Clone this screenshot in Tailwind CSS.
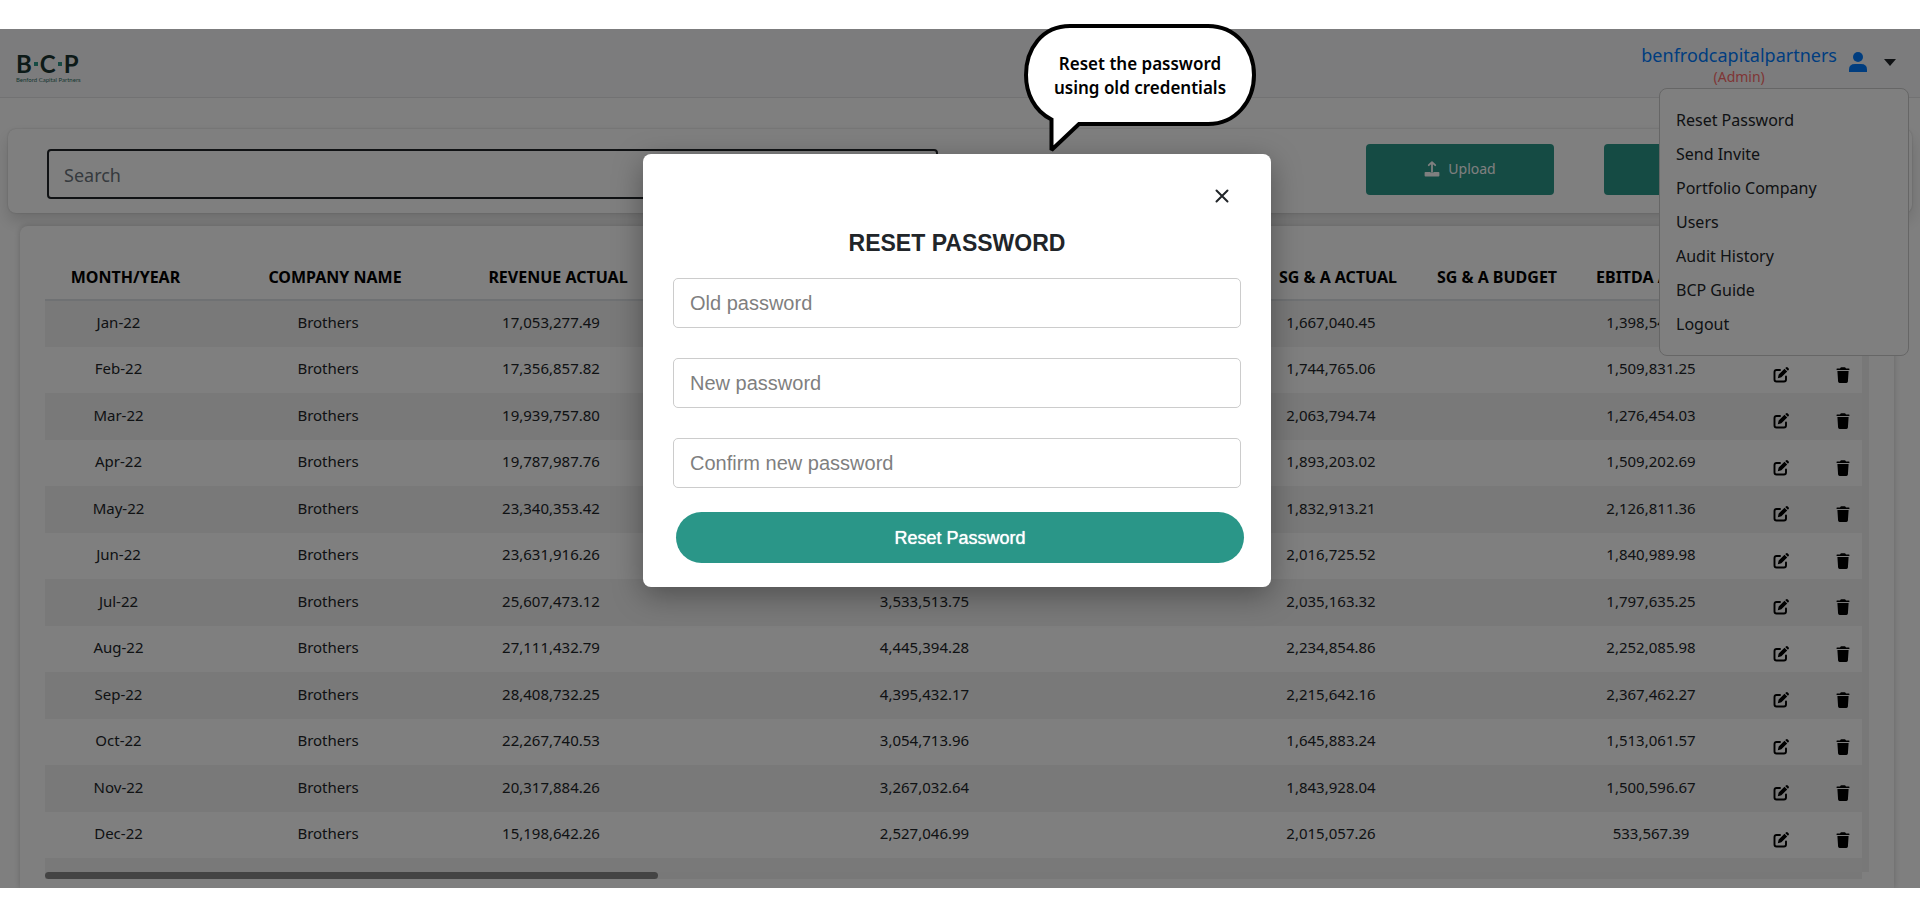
<!DOCTYPE html>
<html lang="en">
<head>
<meta charset="utf-8">
<meta name="viewport" content="width=device-width, initial-scale=1">
<title>BCP – Reset password</title>
<script src="https://cdn.jsdelivr.net/npm/@tailwindcss/browser@4"></script>
</head>
<body class="bg-white">
<svg class="hidden" aria-hidden="true">
  <symbol id="edit" viewBox="0 0 16 16">
    <path d="M7 3H3.500Q1.500 3 1.500 5V12.500Q1.500 14.500 3.500 14.500H11Q13 14.500 13 12.500V9.500" fill="none" stroke="currentColor" stroke-width="1.900" stroke-linecap="round"/>
    <path d="M11.500 1.800L14.200 4.500L8.400 10.300L4.800 11.200L5.700 7.600ZM12.200 1.100L13 .4Q13.900-.3 14.800.5L15.500 1.200Q16.300 2.100 15.600 3L14.900 3.800Z" fill="currentColor"/>
  </symbol>
  <symbol id="trash" viewBox="0 0 14 16">
    <path d="M4.300.9Q4.600.2 5.300.2H8.700Q9.400.2 9.700.9L10 1.400H12.800Q13.600 1.400 13.600 2.200T12.800 3H1.200Q.4 3 .4 2.200T1.200 1.400H4ZM1.400 4H12.600L11.900 14.500Q11.800 15.900 10.400 15.900H3.600Q2.200 15.900 2.100 14.500Z" fill="currentColor"/>
  </symbol>
</svg>

<div class="relative flex min-h-screen flex-col pt-[29px] pb-[30px]">
  <div class="relative flex flex-1 flex-col overflow-hidden bg-white font-['Noto_Sans','Open_Sans',sans-serif] text-[#212529]">

    <header class="flex h-[69px] items-start justify-between border-b border-[#e4e5e6] bg-[#f8f9fa] pr-6 pl-4">
      <a href="#" class="mt-[23px] block font-['Lato',sans-serif] text-[#1b3531]" aria-label="BCP home">
        <span class="flex items-center gap-0.5 text-2xl leading-6 font-bold">B<i class="size-1 bg-[#2a9688]"></i>C<i class="size-1 bg-[#2a9688]"></i>P</span>
        <span class="block text-[6px] leading-2 text-[#2f6f66]">Benford Capital Partners</span>
      </a>
      <div class="flex items-start">
        <div class="mt-3 text-center">
          <a href="#" class="block text-lg leading-7 text-[#007bff]">benfrodcapitalpartners</a>
          <span class="block text-sm leading-4 text-[#ff6b6b]">(Admin)</span>
        </div>
        <svg class="mt-[23px] ml-3 h-5 w-[18px] text-[#007bff]" viewBox="0 0 18 20" fill="currentColor"><ellipse cx="9" cy="5" rx="5" ry="5"/><path d="M0 20V17.500Q0 12 6 12H12Q18 12 18 17.500V20Z"/></svg>
        <button class="mt-[30px] ml-[17px]" aria-label="Account menu"><svg class="h-[7px] w-3" viewBox="0 0 12 7"><path d="M0 0H12L6 7Z" fill="#212529"/></svg></button>
      </div>
    </header>

    <main class="flex flex-1 flex-col">
      <section class="mx-2 mt-[31px] flex h-[84px] items-center rounded-lg bg-white pr-[120px] pl-[39px] shadow-[0_8px_16px_rgba(0,0,0,0.15),0_0_2px_rgba(0,0,0,0.2)]">
        <input type="search" placeholder="Search" aria-label="Search" class="mt-1.5 h-[50px] w-[891px] rounded border-2 border-[#212529] px-[15px] pt-0.5 text-lg placeholder:text-[#6c757d]">
        <button class="mr-[50px] -mt-1 ml-auto flex h-[51px] w-[188px] items-center justify-center gap-2 rounded bg-[#2a9688] text-sm text-white">
          <svg class="size-4" viewBox="0 0 16 16" fill="none" stroke="currentColor" stroke-width="1.800" stroke-linecap="round" stroke-linejoin="round"><path d="M8 11V1.500M4.800 4.200L8 1.200L11.200 4.200"/><path d="M1.500 11.800H5.500Q8 14 10.500 11.800H14.500V14.500H1.500Z" fill="currentColor"/></svg>
          Upload
        </button>
        <button class="-mt-1 h-[51px] w-[188px] rounded bg-[#2a9688] text-sm text-white" aria-label="Export"></button>
      </section>

      <section class="mt-[13px] mr-[26px] ml-5 flex flex-1 flex-col rounded-t-lg bg-white pt-7 pr-[25px] pl-[25px] shadow-[0_0_6px_rgba(0,0,0,0.2)]">
        <div class="flex">
          <div class="h-[618px] min-w-0 flex-1 overflow-hidden">
            <table class="w-full table-fixed border-collapse text-center text-[15px]">
              <colgroup>
                <col class="w-[147px]"><col class="w-[272px]"><col class="w-[174px]"><col><col class="w-[173px]"><col class="w-[233px]"><col class="w-[174px]"><col class="w-[144px]"><col class="w-[178px]"><col class="w-[82px]"><col class="w-[40px]">
              </colgroup>
              <thead>
                <tr class="h-[46px] border-b-2 border-[#dee2e6] text-base whitespace-nowrap text-black">
                  <th class="pl-[14px]">MONTH/YEAR</th><th class="pl-[14px]">COMPANY NAME</th><th class="pl-[14px]">REVENUE ACTUAL</th><th></th><th></th><th></th><th class="pl-[14px]">SG &amp; A ACTUAL</th><th class="pl-[14px]">SG &amp; A BUDGET</th><th class="pl-[14px]">EBITDA ACTUAL</th><th></th><th></th>
                </tr>
              </thead>
              <tbody id="rows"></tbody>
            </table>
          </div>
          <div class="w-[7px] bg-[#f1f1f1]"></div>
        </div>
        <div class="mr-[7px] h-[7px] bg-[#f1f1f1]"><div class="h-full w-[613px] rounded bg-[#888888]"></div></div>
      </section>
    </main>

    <nav class="absolute top-[59px] right-[11px] w-[250px] rounded-lg border border-[#cccccc] bg-white px-4 py-[14px] text-base" aria-label="Account">
      <a href="#" class="block leading-[34px]">Reset Password</a>
      <a href="#" class="block leading-[34px]">Send Invite</a>
      <a href="#" class="block leading-[34px]">Portfolio Company</a>
      <a href="#" class="block leading-[34px]">Users</a>
      <a href="#" class="block leading-[34px]">Audit History</a>
      <a href="#" class="block leading-[34px]">BCP Guide</a>
      <a href="#" class="block leading-[34px]">Logout</a>
    </nav>

    <div class="absolute inset-0 flex items-start justify-center bg-black/50 pt-[125px] pr-[6px]">
      <form class="flex w-[628px] flex-col rounded-lg bg-white px-[30px] pt-[30px] pb-6 font-['Liberation_Sans',Arial,sans-serif] shadow-[0_8px_30px_rgba(0,0,0,0.35)]" role="dialog" aria-labelledby="title">
        <button type="button" class="mr-[7px] self-end p-[1px]" aria-label="Close"><svg class="size-[22px]" viewBox="0 0 22 22" stroke="#212529" stroke-width="2" stroke-linecap="round"><path d="M5.500 5.500L16.500 16.500M16.500 5.500L5.500 16.500"/></svg></button>
        <h1 id="title" class="mt-[21px] text-center text-[23px] leading-7 font-bold">RESET PASSWORD</h1>
        <div class="mt-[21px] flex flex-col gap-[30px]">
          <input type="password" placeholder="Old password" aria-label="Old password" class="h-[50px] rounded-[5px] border border-[#cccccc] px-4 text-xl placeholder:text-[#7f7f7f]">
          <input type="password" placeholder="New password" aria-label="New password" class="h-[50px] rounded-[5px] border border-[#cccccc] px-4 text-xl placeholder:text-[#7f7f7f]">
          <input type="password" placeholder="Confirm new password" aria-label="Confirm new password" class="h-[50px] rounded-[5px] border border-[#cccccc] px-4 text-xl placeholder:text-[#7f7f7f]">
        </div>
        <button type="submit" class="-mr-[3px] mt-6 ml-[3px] h-[51px] rounded-full bg-[#2a9688] text-lg text-white [text-shadow:0_0_1px_white]">Reset Password</button>
      </form>
    </div>
  </div>

  <!-- Callout over the dialog -->
  <div class="absolute top-6 left-1/2 ml-16 h-32 w-[232px]">
    <svg class="absolute inset-0" viewBox="0 0 232 128" width="232" height="128"><path d="M46 2H184C212 2 230 25 230 51S212 100 184 100H55L27.500 126V95.500C10 87 2 69 2 51C2 25 18 2 46 2Z" fill="white" stroke="black" stroke-width="4" stroke-miterlimit="2"/></svg>
    <p class="relative pt-7 text-center font-['Noto_Sans',sans-serif] text-[17px] leading-6 font-semibold text-black">Reset the password<br>using old credentials</p>
  </div>
</div>

<script>
const data = [
  ["Jan-22","17,053,277.49","","1,667,040.45","1,398,544.21"],
  ["Feb-22","17,356,857.82","","1,744,765.06","1,509,831.25"],
  ["Mar-22","19,939,757.80","","2,063,794.74","1,276,454.03"],
  ["Apr-22","19,787,987.76","","1,893,203.02","1,509,202.69"],
  ["May-22","23,340,353.42","","1,832,913.21","2,126,811.36"],
  ["Jun-22","23,631,916.26","","2,016,725.52","1,840,989.98"],
  ["Jul-22","25,607,473.12","3,533,513.75","2,035,163.32","1,797,635.25"],
  ["Aug-22","27,111,432.79","4,445,394.28","2,234,854.86","2,252,085.98"],
  ["Sep-22","28,408,732.25","4,395,432.17","2,215,642.16","2,367,462.27"],
  ["Oct-22","22,267,740.53","3,054,713.96","1,645,883.24","1,513,061.57"],
  ["Nov-22","20,317,884.26","3,267,032.64","1,843,928.04","1,500,596.67"],
  ["Dec-22","15,198,642.26","2,527,046.99","2,015,057.26","533,567.39"]
];
document.getElementById("rows").innerHTML = data.map(([month, revenue, cogs, sga, ebitda]) => `
  <tr class="h-[46px] odd:h-[47px] odd:bg-[#f2f2f2]">
    <td class="pb-[3px]">${month}</td><td class="pb-[3px]">Brothers</td><td class="pb-[3px]">${revenue}</td><td></td><td class="pb-[3px]">${cogs}</td><td></td><td class="pb-[3px]">${sga}</td><td></td><td class="pb-[3px]">${ebitda}</td>
    <td class="pt-[9px]"><button class="block mx-auto text-black" aria-label="Edit ${month}"><svg class="size-4"><use href="#edit"/></svg></button></td>
    <td class="pt-[9px] pl-0.5"><button class="block mx-auto text-black" aria-label="Delete ${month}"><svg class="h-4 w-[14px]"><use href="#trash"/></svg></button></td>
  </tr>`).join("") + '<tr class="h-[47px] bg-[#f2f2f2]"><td colspan="11"></td></tr>';
</script>
</body>
</html>
